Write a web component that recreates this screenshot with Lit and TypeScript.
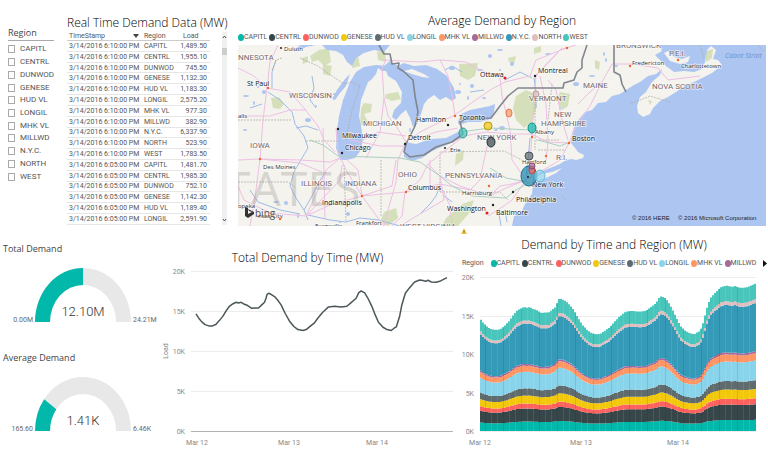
import { LitElement, html, svg, css } from "lit";
import { customElement, property } from "lit/decorators.js";
import { styleMap } from "lit/directives/style-map.js";

interface Region {
  name: string;
  color: string;
  /** share of the total load that lies at or below this region in the stack */
  top: number;
}

const REGIONS: Region[] = [
  { name: "CAPITL", color: "#01b8aa", top: 0.076 },
  { name: "CENTRL", color: "#374649", top: 0.182 },
  { name: "DUNWOD", color: "#fd625e", top: 0.222 },
  { name: "GENESE", color: "#f2c80f", top: 0.286 },
  { name: "HUD VL", color: "#5f6b6d", top: 0.345 },
  { name: "LONGIL", color: "#8ad4eb", top: 0.479 },
  { name: "MHK VL", color: "#fe9666", top: 0.528 },
  { name: "MILLWD", color: "#a66999", top: 0.542 },
  { name: "N.Y.C.", color: "#3599b8", top: 0.868 },
  { name: "NORTH", color: "#dfbfbf", top: 0.894 },
  { name: "WEST", color: "#4ac5bb", top: 1 },
];

const READINGS: [string, string, string][] = [
  ["6:10:00 PM", "CAPITL", "1,489.50"],
  ["6:10:00 PM", "CENTRL", "1,955.10"],
  ["6:10:00 PM", "DUNWOD", "745.50"],
  ["6:10:00 PM", "GENESE", "1,132.30"],
  ["6:10:00 PM", "HUD VL", "1,183.30"],
  ["6:10:00 PM", "LONGIL", "2,575.20"],
  ["6:10:00 PM", "MHK VL", "977.30"],
  ["6:10:00 PM", "MILLWD", "382.90"],
  ["6:10:00 PM", "N.Y.C.", "6,337.90"],
  ["6:10:00 PM", "NORTH", "523.90"],
  ["6:10:00 PM", "WEST", "1,783.50"],
  ["6:05:00 PM", "CAPITL", "1,481.70"],
  ["6:05:00 PM", "CENTRL", "1,985.30"],
  ["6:05:00 PM", "DUNWOD", "752.10"],
  ["6:05:00 PM", "GENESE", "1,142.30"],
  ["6:05:00 PM", "HUD VL", "1,189.40"],
  ["6:05:00 PM", "LONGIL", "2,591.90"],
];

/** Total load: [position along the time range 0..1, thousands of MW]. */
const LOAD: [number, number][] = [
  [0, 14.63], [0.011, 14.1], [0.023, 13.64], [0.036, 13.3], [0.051, 13.14],
  [0.066, 13.14], [0.08, 13.35], [0.093, 13.8], [0.106, 14.3], [0.12, 15.01],
  [0.133, 15.59], [0.146, 15.88], [0.16, 16.09], [0.169, 16.01], [0.18, 16.09],
  [0.193, 15.84], [0.206, 15.68], [0.222, 15.34], [0.235, 15.38], [0.249, 15.38],
  [0.262, 15.76], [0.273, 16.09], [0.279, 16.59], [0.283, 17.09], [0.289, 17.21],
  [0.299, 17.09], [0.313, 16.8], [0.326, 16.34], [0.339, 15.76], [0.355, 14.72],
  [0.372, 13.76], [0.39, 13.06], [0.406, 12.68], [0.426, 12.56], [0.439, 12.68],
  [0.452, 13.01], [0.472, 13.51], [0.485, 14.1], [0.505, 14.84], [0.528, 15.51],
  [0.552, 15.59], [0.578, 15.51], [0.601, 15.59], [0.618, 16.05], [0.638, 16.59],
  [0.648, 17.26], [0.658, 17.51], [0.672, 17.26], [0.685, 16.59], [0.701, 15.55],
  [0.714, 14.51], [0.727, 13.6], [0.745, 12.97], [0.761, 12.68], [0.778, 12.56],
  [0.789, 12.85], [0.798, 13.01], [0.811, 14.3], [0.82, 15.76], [0.834, 17.21],
  [0.851, 17.92], [0.871, 18.63], [0.891, 18.88], [0.904, 18.8], [0.915, 18.71],
  [0.924, 18.84], [0.938, 18.63], [0.957, 18.59], [0.971, 18.71], [0.984, 18.92],
  [1, 19.17],
];

function loadAt(t: number): number {
  for (let i = 1; i < LOAD.length; i++) {
    const [x1, y1] = LOAD[i];
    if (t <= x1) {
      const [x0, y0] = LOAD[i - 1];
      return y0 + ((y1 - y0) * (t - x0)) / (x1 - x0);
    }
  }
  return LOAD[LOAD.length - 1][1];
}

const TICKS = [20, 15, 10, 5, 0];

@customElement("region-legend")
export class RegionLegend extends LitElement {
  @property({ type: Number }) count = REGIONS.length;

  static styles = css`
    :host {
      display: block;
    }
    .items {
      display: flex;
      align-items: center;
      gap: 2px;
      margin: 0;
      padding: 0;
      list-style: none;
      font: 7px/10px Roboto, "Open Sans", sans-serif;
      color: #555;
      white-space: nowrap;
    }
    .item {
      display: flex;
      align-items: center;
    }
    .dot {
      width: 6px;
      height: 7px;
      border-radius: 50%;
    }
  `;

  render() {
    return html`<ul class="items">
      ${REGIONS.slice(0, this.count).map(
        (r) => html`<li class="item">
          <span class="dot" style=${styleMap({ background: r.color })}></span>${r.name}
        </li>`
      )}
    </ul>`;
  }
}

@customElement("demand-gauge")
export class DemandGauge extends LitElement {
  @property() label = "";
  @property() value = "";
  @property() low = "";
  @property() high = "";
  @property({ type: Number }) share = 0;

  static styles = css`
    :host {
      display: block;
    }
    .title {
      margin: 0 0 0 3px;
      font: 400 9px/14px "Open Sans", sans-serif;
      color: #444;
    }
    .dial {
      display: block;
      width: 100%;
      margin-top: 10px;
      overflow: visible;
    }
    .track {
      fill: #e8e8e8;
    }
    .fill {
      fill: #01b8aa;
    }
    .value {
      font: 300 13px Roboto, sans-serif;
      fill: #333;
      text-anchor: middle;
    }
    .end {
      font: 7px Roboto, sans-serif;
      fill: #666;
    }
    .low {
      text-anchor: end;
    }
  `;

  private arc(share: number) {
    const a = Math.PI * (1 - share);
    const c = Math.cos(a);
    const s = Math.sin(a);
    return `M35 56A48 54 0 0 1 ${83 + 48 * c} ${56 - 54 * s}L${83 + 33 * c} ${
      56 - 37 * s
    }A33 37 0 0 0 50 56Z`;
  }

  render() {
    return html`<h2 class="title">${this.label}</h2>
      <svg class="dial" viewBox="0 0 155 62" role="img" aria-label=${this.label}>
        <path class="track" d=${this.arc(1)} />
        <path class="fill" d=${this.arc(this.share)} />
        <text class="value" x="83" y="50">${this.value}</text>
        <text class="end low" x="33" y="56">${this.low}</text>
        <text class="end" x="133" y="56">${this.high}</text>
      </svg>`;
  }
}

@customElement("load-line")
export class LoadLine extends LitElement {
  static styles = css`
    :host {
      display: block;
    }
    .plot {
      display: block;
      width: 100%;
    }
    .grid {
      stroke: #ececec;
    }
    .base {
      stroke: #b3b3b3;
    }
    .tick {
      font: 7px Roboto, sans-serif;
      fill: #888;
    }
    .y {
      text-anchor: end;
    }
    .mid {
      text-anchor: middle;
    }
    .line {
      fill: none;
      stroke: #4b5759;
      stroke-width: 1.5;
      stroke-linejoin: round;
    }
  `;

  render() {
    const y = (k: number) => 165 - k * 8;
    const pts = LOAD.map(([t, k]) => `${41 + t * 251},${y(k)}`).join(" ");
    return html`<svg class="plot" viewBox="0 0 305 183" role="img" aria-label="Total demand by time">
      ${TICKS.map(
        (k) => svg`<line class=${k ? "grid" : "base"} x1="36" x2="298" y1=${y(k) + 0.5} y2=${y(k) + 0.5} />
          <text class="tick y" x="30" y=${y(k) + 3}>${k}K</text>`
      )}
      <polyline class="line" points=${pts} />
      <text class="tick mid" x="0" y="0" transform="translate(13 85) rotate(-90)">Load</text>
      <text class="tick mid" x="42" y="179">Mar 12</text>
      <text class="tick mid" x="134" y="179">Mar 13</text>
      <text class="tick mid" x="222" y="179">Mar 14</text>
    </svg>`;
  }
}

@customElement("load-stack")
export class LoadStack extends LitElement {
  static styles = css`
    :host {
      display: block;
    }
    .plot {
      display: block;
      width: 100%;
    }
    .grid {
      stroke: #ececec;
    }
    .tick {
      font: 7px Roboto, sans-serif;
      fill: #888;
    }
    .y {
      text-anchor: end;
    }
    .mid {
      text-anchor: middle;
    }
    .seam {
      stroke: #fff;
      stroke-opacity: 0.1;
    }
    .seam.dark {
      stroke: #123;
      stroke-opacity: 0.12;
    }
  `;

  render() {
    const left = 20;
    const bars = 138;
    const y = (k: number) => 162 - k * 7.7;
    const band = (bottom: number, top: number) => {
      let up = "";
      let down = "";
      for (let i = 0; i < bars; i++) {
        const k = loadAt((i + 0.5) / bars);
        const x = left + i * 2;
        up += `L${x} ${y(k * top).toFixed(1)}H${x + 2}`;
        down = `L${x + 2} ${y(k * bottom).toFixed(1)}H${x}` + down;
      }
      return `M${up.slice(1)}${down}Z`;
    };
    return html`<svg class="plot" viewBox="0 0 308 180" role="img" aria-label="Demand by time and region">
      ${TICKS.map(
        (k) => svg`<line class="grid" x1="20" x2="296" y1=${Math.round(y(k)) + 0.5} y2=${Math.round(y(k)) + 0.5} />
          <text class="tick y" x="14" y=${y(k) + 3}>${k}K</text>`
      )}
      ${REGIONS.map(
        (r, i) => svg`<path fill=${r.color} d=${band(i ? REGIONS[i - 1].top : 0, r.top)} />`
      )}
      ${Array.from({ length: 45 }, (_, i) => {
        const x = left + 6 * (i + 1) - 0.5;
        return svg`<line class=${i % 3 ? "seam" : "seam dark"} x1=${x} x2=${x} y1="162" y2=${y(
          loadAt((x - left) / 276)
        )} />`;
      })}
      <text class="tick mid" x="20" y="176">Mar 12</text>
      <text class="tick mid" x="121" y="176">Mar 13</text>
      <text class="tick mid" x="218" y="176">Mar 14</text>
    </svg>`;
  }
}

interface Place {
  x: number;
  y: number;
  text: string;
}

const STATES: Place[] = [
  { x: 238, y: 60, text: "NNESOTA" },
  { x: 289, y: 98, text: "WISCONSIN" },
  { x: 363, y: 126, text: "MICHIGAN" },
  { x: 250, y: 148, text: "IOWA" },
  { x: 301, y: 186, text: "ILLINOIS" },
  { x: 345, y: 186, text: "INDIANA" },
  { x: 398, y: 177, text: "OHIO" },
  { x: 445, y: 178, text: "PENNSYLVANIA" },
  { x: 477, y: 140, text: "NEW YORK" },
  { x: 529, y: 101, text: "VERMONT" },
  { x: 583, y: 88, text: "MAINE" },
  { x: 554, y: 117, text: "NEW" },
  { x: 541, y: 126, text: "HAMPSHIRE" },
  { x: 652, y: 89, text: "NOVA SCOTIA" },
  { x: 669, y: 56, text: "P.E.I." },
  { x: 616, y: 48, text: "BRUNSWICK" },
  { x: 400, y: 229, text: "WEST VIRGINIA" },
  { x: 556, y: 160, text: "R.I." },
];

const CITIES: Place[] = [
  { x: 247, y: 86, text: "St Paul" },
  { x: 342, y: 138, text: "Milwaukee" },
  { x: 345, y: 150, text: "Chicago" },
  { x: 408, y: 140, text: "Detroit" },
  { x: 416, y: 122, text: "Hamilton" },
  { x: 459, y: 120, text: "Toronto" },
  { x: 480, y: 77, text: "Ottawa" },
  { x: 538, y: 73, text: "Montreal" },
  { x: 572, y: 141, text: "Boston" },
  { x: 532, y: 187, text: "New York" },
  { x: 516, y: 202, text: "Philadelphia" },
  { x: 496, y: 215, text: "Baltimore" },
  { x: 447, y: 211, text: "Washington" },
  { x: 408, y: 190, text: "Columbus" },
  { x: 322, y: 205, text: "Indianapolis" },
];

const TOWNS: Place[] = [
  { x: 284, y: 51, text: "Duluth" },
  { x: 238, y: 118, text: "alls" },
  { x: 263, y: 169, text: "Des Moines" },
  { x: 450, y: 152, text: "Erie" },
  { x: 535, y: 134, text: "Albany" },
  { x: 522, y: 164, text: "Hartford" },
  { x: 462, y: 195, text: "Harrisburg" },
  { x: 356, y: 225, text: "Frankfort" },
  { x: 315, y: 228, text: "Evansville" },
  { x: 238, y: 208, text: "opeka" },
  { x: 258, y: 218, text: "nsas City" },
  { x: 632, y: 65, text: "Fredericton" },
  { x: 681, y: 68, text: "Charlottetown" },
];

const WATER = [
  "M300 45L292 51 300 50 306 47 316 45ZM322 45L327 50 336 51 343 55 347 62 352 66 356 58 364 53 374 50 384 52 390 45Z",
  "M340 160L336 148 337 130 339 116 343 100 347 90 350 82 356 72 364 67 376 65 388 66 394 64 402 67 392 71 382 71 378 68 376 74 371 80 368 82 365 90 361 100 359 116 361 126 363 138 361 150 355 158 347 160Z",
  "M332 99L337 90 345 79 350 74 346 86 340 93 335 100Z",
  "M384 66L390 61 396 67 404 63 414 66 426 65 437 69 447 76 454 88 456 98 452 101 446 97 440 100 434 95 428 99 424 104 421 114 417 124 413 127 410 118 406 110 401 114 396 120 392 117 394 110 401 103 402 92 396 81 388 76Z",
  "M404 151L405 142 416 144 430 139 446 138 456 133 463 130 461 138 446 145 432 151 422 158 412 161 404 157Z",
  "M458 122L461 114 470 110 480 108 490 106 495 104 494 112 491 119 480 122 468 122 459 125Z",
  "M766 45V226H512L514 216 521 213 526 202 532 194 533 184 533 177 540 172 550 168 560 164 566 160 572 159 576 160 583 158 584 155 578 152 575 148 571 143 572 134 575 124 580 118 585 112 592 110 598 103 606 102 612 96 620 94 626 90 634 85 640 82 648 76 656 74 662 69 660 75 652 82 646 92 640 97 637 106 638 113 643 117 650 114 653 108 660 101 668 97 676 92 686 85 694 82 704 77 712 73 722 65 718 60 713 59 716 50 711 46 707 50 705 62 702 69 694 72 684 71 674 72 666 66 660 60 655 55 662 51 659 45Z",
];

const ISLANDS = [
  "M534 178L542 174 552 172 562 168 556 173 546 178 535 182Z",
  "M664 53L668 51 674 57 682 59 690 56 688 62 680 64 670 61Z",
  "M404 71L412 69 424 74 430 78 422 77 412 74Z",
];

const FORESTS = [
  "M319 50L329 48 331 62 324 66 318 60 312 62 310 56Z",
  "M323 64L332 66 330 76 323 74Z",
  "M302 58L308 56 308 62 303 64Z",
  "M271 98L279 97 284 104 280 109 273 108Z",
  "M352 58L358 56 360 66 352 68Z",
  "M377 52L385 50 386 62 378 60Z",
  "M364 103L372 104 371 112 364 114 368 122 360 126 361 108Z",
  "M386 94L398 92 401 99 392 101 385 98Z",
  "M459 64L478 63 475 76 468 80 460 76Z",
  "M516 96L526 90 535 94 537 106 532 122 524 128 516 120 513 108Z",
  "M560 92L570 94 568 106 562 110 557 100Z",
  "M456 154L464 150 463 160 455 166Z",
  "M595 60L600 62 599 70 595 68Z",
  "M508 58L516 56 514 64 509 62ZM534 48L541 46 541 52 534 54Z",
  "M446 218L462 204 474 200 470 212 458 226 442 226Z",
  "M384 212L396 208 398 218 388 226 380 222Z",
  "M706 51L713 49 712 58 706 62ZM648 100L652 101 650 105Z",
];

const ROADS = [
  "M278 45L270 62 267 88 263 120 260 159 256 190 250 226M238 68L254 76 267 88 290 92 304 108 318 126 324 140 335 152",
  "M238 116H270L290 110 306 110M238 160L260 159 300 160 330 162 340 158M260 159L300 163 322 172",
  "M238 186L244 200 270 213 306 216 330 205 362 196 405 192 440 184 470 190M306 216L318 190 326 170 340 158",
  "M323 128L325 220M336 128L338 152 346 170 362 196 378 218 384 226M306 216L340 180 342 165M362 196L358 170 345 158M362 196L392 186 396 160",
  "M384 98L388 116 396 126 406 142 398 160 396 182 388 210 384 226M363 140L378 132 406 136M366 158L380 132 384 98 382 68 386 60M350 140L380 146 406 146",
  "M406 142L420 132 440 122 455 115 470 104 490 90 505 82 530 76 536 60 566 48M384 60L420 62 440 60 448 76 452 96 455 115M440 60L466 62 488 74 506 78",
  "M405 192L420 180 428 164 446 150 464 136 486 132 510 134 531 134 548 142 569 143M405 192L402 216 392 226M428 164L440 176 460 186 490 196 506 188 526 180 540 172 560 160 569 143 576 126 590 106 602 82 612 64 632 64 658 68 668 80 700 76",
  "M500 78L502 96 510 130 512 160 526 180M536 76L534 100 532 134 530 162 526 180M540 76L546 104 548 142 546 160M548 80L556 90 562 120 568 140",
  "M490 196L500 186 512 184 526 180 512 200 498 210 488 216M440 176L444 200 420 214 400 226M470 190L480 180 484 160 490 134M452 226L450 206 440 184",
  "M536 76L560 50 576 45M535 76L562 48M602 82L590 92 578 104M430 160V190M414 140L436 132 458 128",
];

const HIGHWAYS = [
  "M323 145L338 156 400 158 420 162 440 176 452 186 472 196 506 198M323 145L310 140M460 132L490 128 530 130M490 168L506 178 528 182M538 140L560 146 570 142M506 198L516 190 530 182",
];

const RIVERS = [
  "M268 92L280 100 292 112 295 124 304 136 308 148 302 158 294 172 290 186 296 198 304 210 308 220",
  "M276 60L272 72 272 88M312 76L314 88 310 100 316 108M296 128L306 126 318 130M304 210L312 196 320 180 326 172M308 215L330 220 346 222 360 218 378 220 400 226",
  "M250 190L258 202 280 210 300 214M420 214L430 204 436 196 440 186M534 78L536 92 536 108M530 138L528 160 526 176M505 80L520 72 532 78",
  "M445 70L452 66 462 72M470 92L484 90M505 210L507 222M499 214L501 226M250 108L262 104M444 196L452 202",
];

const BORDERS = [
  "M238 120H292M272 70L276 60 282 58M238 182H288L296 188M344 165L346 222M381 160V216M306 141H340M440 192H500L508 200M440 192V152L504 151 522 160M300 58L318 66 338 80 344 84 352 82 360 86 352 110 346 140M535 98V150M538 150H566M536 140L560 140M552 84L548 120M562 196L566 200",
  "M670 102L650 96 630 104M700 45L704 58M758 45L764 52",
];

const LAKES: [number, number][] = [
  [258, 87], [264, 92], [246, 96], [254, 103], [245, 130], [308, 120], [316, 106], [286, 203], [276, 202],
  [298, 216], [335, 94], [452, 68], [460, 84], [472, 86], [480, 70], [468, 98], [484, 98], [458, 92],
  [500, 70], [512, 64], [592, 76], [606, 60], [616, 66], [576, 84], [340, 222], [348, 214], [500, 50],
  [410, 130], [496, 130], [502, 128], [560, 108], [490, 56], [548, 54], [604, 54],
];

const DOTS: { x: number; y: number; color: string; r: number }[] = [
  { x: 281, y: 48, color: "#222", r: 1 },
  { x: 338, y: 129, color: "#222", r: 1.2 },
  { x: 342, y: 153, color: "#222", r: 1.2 },
  { x: 405, y: 144, color: "#222", r: 1.2 },
  { x: 448, y: 125, color: "#222", r: 1.2 },
  { x: 445, y: 148, color: "#222", r: 1 },
  { x: 535, y: 76, color: "#222", r: 1.2 },
  { x: 513, y: 192, color: "#222", r: 1.2 },
  { x: 493, y: 205, color: "#222", r: 1.2 },
  { x: 505, y: 78, color: "#d22", r: 1.5 },
  { x: 487, y: 213, color: "#d22", r: 1.5 },
  { x: 268, y: 88, color: "#f0662c", r: 1.2 },
  { x: 260, y: 159, color: "#f0662c", r: 1.2 },
  { x: 362, y: 196, color: "#f0662c", r: 1.2 },
  { x: 406, y: 192, color: "#f0662c", r: 1.2 },
  { x: 455, y: 116, color: "#f0662c", r: 1.2 },
  { x: 489, y: 186, color: "#f0662c", r: 1.2 },
  { x: 532, y: 137, color: "#f0662c", r: 1.2 },
  { x: 546, y: 156, color: "#f0662c", r: 1.2 },
  { x: 569, y: 143, color: "#f0662c", r: 1.2 },
  { x: 280, y: 219, color: "#f0662c", r: 1.2 },
  { x: 567, y: 48, color: "#f0662c", r: 1.2 },
  { x: 630, y: 66, color: "#f0662c", r: 1.2 },
  { x: 678, y: 60, color: "#f0662c", r: 1.2 },
];

const BUBBLES: { x: number; y: number; rx: number; ry: number; color: string; edge: string }[] = [
  { x: 463, y: 133, rx: 4, ry: 5, color: "#4ac5bb", edge: "#2d9a92" },
  { x: 488, y: 126, rx: 4, ry: 4, color: "#f2c80f", edge: "#b8980c" },
  { x: 491, y: 142, rx: 4, ry: 5, color: "#374649", edge: "#263235" },
  { x: 509, y: 113, rx: 3, ry: 4, color: "#fe9666", edge: "#e07a4a" },
  { x: 536, y: 94, rx: 3, ry: 3, color: "#dfbfbf", edge: "#b99a9a" },
  { x: 532, y: 128, rx: 4, ry: 5, color: "#01b8aa", edge: "#0a8f85" },
  { x: 529, y: 156, rx: 4, ry: 4, color: "#5f6b6d", edge: "#465052" },
  { x: 529, y: 176, rx: 8, ry: 10, color: "#1a86ac", edge: "#1a6f92" },
  { x: 540, y: 176, rx: 5, ry: 6, color: "#8ad4eb", edge: "#6bb8d6" },
  { x: 532, y: 170, rx: 3, ry: 4, color: "#fd625e", edge: "#c64440" },
  { x: 532, y: 166, rx: 3, ry: 3, color: "#a66999", edge: "#86487a" },
];

@customElement("demand-map")
export class DemandMap extends LitElement {
  static styles = css`
    :host {
      display: block;
    }
    .map {
      display: block;
      width: 100%;
      background: #f5f3ee;
    }
    .water {
      fill: #adc6f1;
    }
    .land {
      fill: #f5f3ee;
    }
    .forest {
      fill: #d5e0bb;
    }
    .road,
    .highway,
    .river,
    .border,
    .frontier {
      fill: none;
      stroke-linejoin: round;
    }
    .road {
      stroke: #edbfe4;
    }
    .highway {
      stroke: #a9cfc0;
    }
    .river {
      stroke: #9dbbe6;
    }
    .border {
      stroke: #a9a7a3;
      stroke-dasharray: 2 1;
      stroke-width: 0.7;
    }
    .frontier {
      stroke: #80868d;
      stroke-width: 1.6;
    }
    .country {
      font: 48px "Open Sans", sans-serif;
      fill: #8a8a84;
      fill-opacity: 0.3;
    }
    .state {
      font: 8px Roboto, sans-serif;
      fill: #77696c;
    }
    .city {
      font: 7px "Open Sans", sans-serif;
      fill: #111;
    }
    .town {
      font: 6px "Open Sans", sans-serif;
      fill: #333;
    }
    .state,
    .city,
    .town {
      paint-order: stroke;
      stroke: #fff;
      stroke-opacity: 0.6;
      stroke-width: 1.5;
    }
    .sea {
      font: italic 7px "Open Sans", sans-serif;
      fill: #6c92cf;
    }
    .credit {
      font: 6px "Liberation Sans", sans-serif;
      fill: #222;
    }
    .brand {
      font: 10px "Open Sans", sans-serif;
      fill: #555;
    }
    .mark {
      fill: #333;
    }
    .bubble {
      fill-opacity: 0.7;
    }
  `;

  render() {
    const lines = (cls: string, ds: string[]) => ds.map((d) => svg`<path class=${cls} d=${d} />`);
    const labels = (cls: string, ps: Place[]) =>
      ps.map((p) => svg`<text class=${cls} x=${p.x} y=${p.y}>${p.text}</text>`);
    return html`<svg class="map" viewBox="238 45 528 181" role="img" aria-label="Map of average demand by region">
      ${lines("forest", FORESTS)} ${lines("river", RIVERS)} ${lines("water", WATER)}
      ${lines("land", ISLANDS)}
      ${LAKES.map(([x, y], i) => svg`<ellipse class="water" cx=${x} cy=${y} rx=${1 + (i % 3)} ry=${1 + (i % 2)} />`)}
      ${lines("border", BORDERS)} ${lines("road", ROADS)} ${lines("highway", HIGHWAYS)}
      <path
        class="frontier"
        d="M379 45L384 54 390 54 392 64 399 63 398 68 403 71 413 80 415 96 418 112 415 126 411 134 406 144 404 152 410 157 424 155 436 147 452 142 463 134 460 122 466 119 491 118 500 106 508 96 518 88 563 88 564 83 574 80 577 72 582 68 582 60 587 45M614 45V72L620 75 622 84 626 92"
      />
      <text class="country" x="224" y="206">TATES</text>
      ${labels("state", STATES)} ${labels("town", TOWNS)} ${labels("city", CITIES)}
      <text class="sea" x="725" y="58">Cabot Strait</text>
      ${DOTS.map((d) => svg`<circle cx=${d.x} cy=${d.y} r=${d.r} fill=${d.color} />`)}
      ${BUBBLES.map(
        (b) => svg`<ellipse class="bubble" cx=${b.x} cy=${b.y} rx=${b.rx} ry=${b.ry} fill=${b.color} stroke=${b.edge} />`
      )}
      <circle cx="528" cy="177" r="1" fill="#123" />
      <path class="mark" d="M245 207L248 208V214L252 212 249 211 248 209 254 212V214L248 218 245 216Z" />
      <text class="brand" x="255" y="217">bing</text>
      <text class="credit" x="632" y="220">© 2016 HERE</text>
      <text class="credit" x="678" y="220">© 2016 Microsoft Corporation</text>
    </svg>`;
  }
}

@customElement("app-root")
export class AppRoot extends LitElement {
  static styles = css`
    :host {
      display: block;
      background: #fff;
      color: #444;
      font-family: "Open Sans", sans-serif;
    }
    .top {
      display: grid;
      grid-template-columns: minmax(0, 67fr) minmax(0, 167fr) minmax(0, 534fr);
      padding-top: 13px;
    }
    .bottom {
      display: grid;
      grid-template-columns: minmax(0, 155fr) minmax(0, 305fr) minmax(0, 308fr);
    }
    .title {
      margin: 0;
      font-size: 12px;
      font-weight: 300;
      line-height: 16px;
      text-align: center;
      white-space: nowrap;
      color: #000;
    }
    .slicer {
      margin: 13px 0 0 8px;
      padding: 0;
      border: 0;
      min-width: 0;
    }
    .caption {
      width: 46px;
      box-sizing: border-box;
      padding: 0;
      border-bottom: 1px solid #aaa;
      font-size: 9px;
      line-height: 14px;
    }
    .choices {
      display: grid;
      grid-auto-rows: 1fr;
      height: 140px;
      margin-top: 2px;
    }
    .choice {
      display: flex;
      align-items: center;
      gap: 5px;
      font: 8px/12px Roboto, sans-serif;
      color: #555;
      white-space: nowrap;
    }
    .box {
      appearance: none;
      width: 7px;
      height: 8px;
      margin: 0;
      border: 1px solid #aaa;
      background: #fff;
    }
    .box:checked {
      background: #555;
    }
    .live .title {
      margin-top: 2px;
      text-align: left;
    }
    .feed {
      display: flex;
      justify-content: space-between;
      margin-top: 1px;
      padding-right: 7px;
    }
    .readings {
      table-layout: fixed;
      width: 143px;
      height: 193px;
      border-collapse: collapse;
      font: 7px/8px Roboto, sans-serif;
      color: #555;
      white-space: nowrap;
    }
    .readings th,
    .readings td {
      padding: 0 3px 0 2px;
      border-bottom: 1px solid #e6e6e6;
      text-align: left;
      font-weight: 400;
    }
    .readings th {
      border-bottom-color: #ccc;
    }
    .readings .num {
      text-align: right;
    }
    .readings th.num {
      padding-left: 7px;
      text-align: left;
    }
    .when {
      width: 70px;
    }
    .where {
      width: 29px;
    }
    .sorted {
      display: flex;
      justify-content: space-between;
    }
    .arrow {
      width: 6px;
      height: 4px;
      margin-top: 2px;
      fill: #444;
    }
    .bar {
      display: flex;
      flex-direction: column;
      justify-content: space-between;
      width: 5px;
      background: #f0f0f0;
    }
    .nub {
      width: 5px;
      fill: none;
      stroke: #555;
    }
    .thumb {
      flex: none;
      height: 7px;
      margin: 8px 0 auto;
      background: #cdcdcd;
    }
    .geo {
      padding: 0 2px 0 4px;
    }
    .geo .title {
      margin-bottom: 3px;
    }
    .geo demand-map {
      margin-top: 3px;
    }
    .warn {
      display: block;
      width: 6px;
      margin: 2px auto 3px 223px;
    }
    .gauges {
      display: grid;
      align-content: start;
      gap: 23px;
      padding-top: 5px;
    }
    .trend {
      padding-top: 13px;
    }
    .key {
      display: flex;
      align-items: center;
      gap: 7px;
      margin: 5px 0 1px 2px;
      font: 7px/10px Roboto, sans-serif;
      color: #555;
    }
    .next {
      width: 5px;
      height: 8px;
      margin: 0 2px 0 auto;
      padding: 0;
      border: 0;
      background: none;
      line-height: 0;
    }
  `;

  render() {
    return html`
      <section class="top">
        <fieldset class="slicer">
          <legend class="caption">Region</legend>
          <div class="choices">
            ${REGIONS.map(
              (r) => html`<label class="choice"><input class="box" type="checkbox" />${r.name}</label>`
            )}
          </div>
        </fieldset>
        <div class="live">
          <h1 class="title">Real Time Demand Data (MW)</h1>
          <div class="feed">
            <table class="readings">
              <thead>
                <tr>
                  <th class="when">
                    <span class="sorted"
                      >TimeStamp<svg class="arrow" viewBox="0 0 6 4"><path d="M0 0H6L3 4Z" /></svg
                    ></span>
                  </th>
                  <th class="where">Region</th>
                  <th class="num">Load</th>
                </tr>
              </thead>
              <tbody>
                ${READINGS.map(
                  ([time, region, load]) => html`<tr>
                    <td>3/14/2016 ${time}</td>
                    <td>${region}</td>
                    <td class="num">${load}</td>
                  </tr>`
                )}
              </tbody>
            </table>
            <div class="bar">
              <svg class="nub" viewBox="0 0 5 8"><path d="M1 6L2.500 4 4 6" /></svg>
              <div class="thumb"></div>
              <svg class="nub" viewBox="0 0 5 8"><path d="M1 2L2.500 4 4 2" /></svg>
            </div>
          </div>
        </div>
        <div class="geo">
          <h1 class="title">Average Demand by Region</h1>
          <region-legend></region-legend>
          <demand-map></demand-map>
          <svg class="warn" viewBox="0 0 6 6"><path fill="#f6c544" d="M3 0L6 6H0Z" /><path stroke="#7a5a10" d="M3 2V5" stroke-width="0.8" /></svg>
        </div>
      </section>
      <section class="bottom">
        <div class="gauges">
          <demand-gauge label="Total Demand" value="12.10M" low="0.00M" high="24.21M" share="0.5"></demand-gauge>
          <demand-gauge label="Average Demand" value="1.41K" low="165.60" high="6.46K" share="0.2"></demand-gauge>
        </div>
        <div class="trend">
          <h1 class="title">Total Demand by Time (MW)</h1>
          <load-line></load-line>
        </div>
        <div>
          <h1 class="title">Demand by Time and Region (MW)</h1>
          <div class="key">
            Region<region-legend count="8"></region-legend>
            <button class="next" aria-label="Next regions">
              <svg width="4" height="7" viewBox="0 0 4 7"><path d="M0 0L4 3.500 0 7Z" fill="#111" /></svg>
            </button>
          </div>
          <load-stack></load-stack>
        </div>
      </section>
    `;
  }
}
